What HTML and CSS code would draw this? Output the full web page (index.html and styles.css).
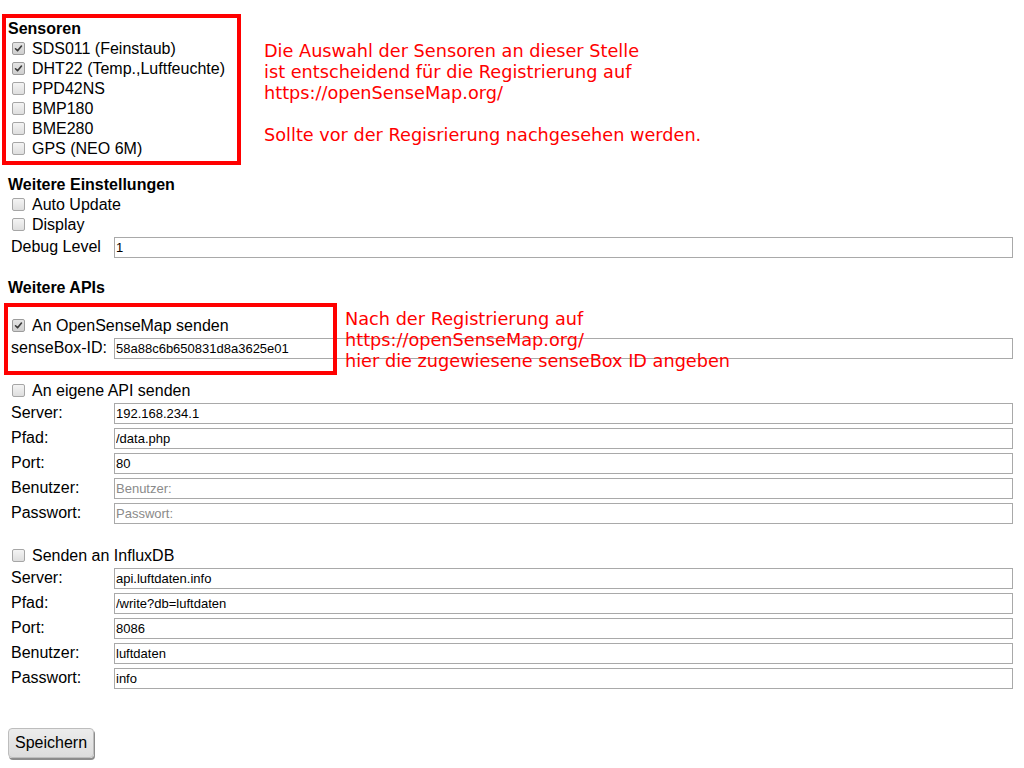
FILE: index.html
```
<!DOCTYPE html>
<html lang="de">
<head>
<meta charset="utf-8">
<title>Konfiguration</title>
<link rel="stylesheet" href="styles.css">
</head>
<body>
<form class="content">
  <div class="head">Sensoren</div>
  <div class="row"><span class="cb on"><svg viewBox="0 0 13 13"><path d="M3 6.8 L5.4 9.2 L10 3.6" /></svg></span>SDS011 (Feinstaub)</div>
  <div class="row"><span class="cb on"><svg viewBox="0 0 13 13"><path d="M3 6.8 L5.4 9.2 L10 3.6" /></svg></span>DHT22 (Temp.,Luftfeuchte)</div>
  <div class="row"><span class="cb"></span>PPD42NS</div>
  <div class="row"><span class="cb"></span>BMP180</div>
  <div class="row"><span class="cb"></span>BME280</div>
  <div class="row"><span class="cb"></span>GPS (NEO 6M)</div>

  <div class="head gap16">Weitere Einstellungen</div>
  <div class="row"><span class="cb"></span>Auto Update</div>
  <div class="row"><span class="cb"></span>Display</div>
  <div class="fields">
    <label class="lbl">Debug Level</label><input class="txt" type="text" value="1">
  </div>

  <div class="head gap16">Weitere APIs</div>
  <div class="row gap18"><span class="cb on"><svg viewBox="0 0 13 13"><path d="M3 6.8 L5.4 9.2 L10 3.6" /></svg></span>An OpenSenseMap senden</div>
  <div class="fields">
    <label class="lbl">senseBox-ID:</label><input class="txt" type="text" value="58a88c6b650831d8a3625e01">
  </div>

  <div class="row gap18"><span class="cb"></span>An eigene API senden</div>
  <div class="fields">
    <label class="lbl">Server:</label><input class="txt" type="text" value="192.168.234.1">
    <label class="lbl">Pfad:</label><input class="txt" type="text" value="/data.php">
    <label class="lbl">Port:</label><input class="txt" type="text" value="80">
    <label class="lbl">Benutzer:</label><input class="txt" type="text" placeholder="Benutzer:">
    <label class="lbl">Passwort:</label><input class="txt" type="password" placeholder="Passwort:">
  </div>

  <div class="row gap18"><span class="cb"></span>Senden an InfluxDB</div>
  <div class="fields">
    <label class="lbl">Server:</label><input class="txt" type="text" value="api.luftdaten.info">
    <label class="lbl">Pfad:</label><input class="txt" type="text" value="/write?db=luftdaten">
    <label class="lbl">Port:</label><input class="txt" type="text" value="8086">
    <label class="lbl">Benutzer:</label><input class="txt" type="text" value="luftdaten">
    <label class="lbl">Passwort:</label><input class="txt" type="text" value="info">
  </div>

  <div class="actions"><button type="button" class="btn">Speichern</button></div>
</form>

<div class="mark mark-sensors"></div>
<div class="note note-sensors">Die Auswahl der Sensoren an dieser Stelle<br>ist entscheidend für die Registrierung auf<br>https://openSenseMap.org/<br><br>Sollte vor der Regisrierung nachgesehen werden.</div>
<div class="mark mark-sensebox"></div>
<div class="note note-sensebox">Nach der Registrierung auf<br>https://openSenseMap.org/<br>hier die zugewiesene senseBox ID angeben</div>
</body>
</html>
```
FILE: styles.css
```
html, body {
  margin: 0;
  padding: 0;
  background: #fff;
}
body {
  position: relative;
  font-family: "Liberation Sans", Arial, sans-serif;
  font-size: 16px;
  color: #000;
  min-height: 768px;
}
.content {
  padding: 18px 8px 8px 8px;
}
.head {
  font-weight: bold;
  box-sizing: border-box;
  height: 20px;
  padding-top: 1px;
  line-height: 20px;
}
.gap16 { margin-top: 16px; }
.gap18 { margin-top: 18px; }
.row {
  display: flex;
  align-items: flex-start;
  box-sizing: border-box;
  height: 20px;
  padding-top: 1px;
  line-height: 20px;
}
.cb {
  flex: none;
  box-sizing: border-box;
  width: 13px;
  height: 13px;
  margin: 3px 7px 0 4px;
  border: 1px solid #a6a6a6;
  border-radius: 2px;
  background: linear-gradient(#f4f4f4, #dedede);
}
.cb svg {
  display: block;
  width: 11px;
  height: 11px;
  margin: 0;
}
.cb svg path {
  fill: none;
  stroke: #3a3a3a;
  stroke-width: 1.9;
  stroke-linecap: round;
  stroke-linejoin: round;
}
.cb.on {
  background: linear-gradient(#e4e4e4, #cfcfcf);
  border-color: #9c9c9c;
}
.fields {
  display: grid;
  grid-template-columns: 101px 1fr;
  gap: 2px;
  padding: 2px;
}
.lbl {
  box-sizing: border-box;
  padding: 2px 1px 0 1px;
  line-height: 18px;
  height: 23px;
}
.txt {
  box-sizing: border-box;
  width: calc(100% - 2px);
  height: 21px;
  margin: 1px;
  padding: 1px 1px;
  border: 1px solid #a9a9a9;
  font-family: "Liberation Sans", Arial, sans-serif;
  font-size: 13px;
  color: #000;
  background: #fff;
  outline: none;
}
.txt::placeholder {
  color: #8a8a8a;
}
.actions {
  padding-top: 36px;
}
.btn {
  box-sizing: border-box;
  height: 30px;
  padding: 5px 6px;
  font-family: "Liberation Sans", Arial, sans-serif;
  font-size: 16px;
  line-height: 18px;
  color: #000;
  border: 1px solid #bdbdbd;
  border-radius: 4px;
  background: linear-gradient(#ececec, #dcdcdc);
  box-shadow: 1px 2px 0 #8c8c8c;
}
.mark {
  position: absolute;
  box-sizing: border-box;
  border: 4px solid #ff0000;
}
.mark-sensors {
  left: 2px;
  top: 14px;
  width: 239px;
  height: 151px;
}
.mark-sensebox {
  left: 4px;
  top: 303px;
  width: 333px;
  height: 72px;
}
.note {
  position: absolute;
  font-family: "DejaVu Sans", Verdana, sans-serif;
  font-size: 17.7px;
  line-height: 21px;
  color: #ff0000;
  white-space: nowrap;
}
.note-sensors {
  left: 264px;
  top: 41px;
}
.note-sensebox {
  left: 345px;
  top: 309px;
}
```
